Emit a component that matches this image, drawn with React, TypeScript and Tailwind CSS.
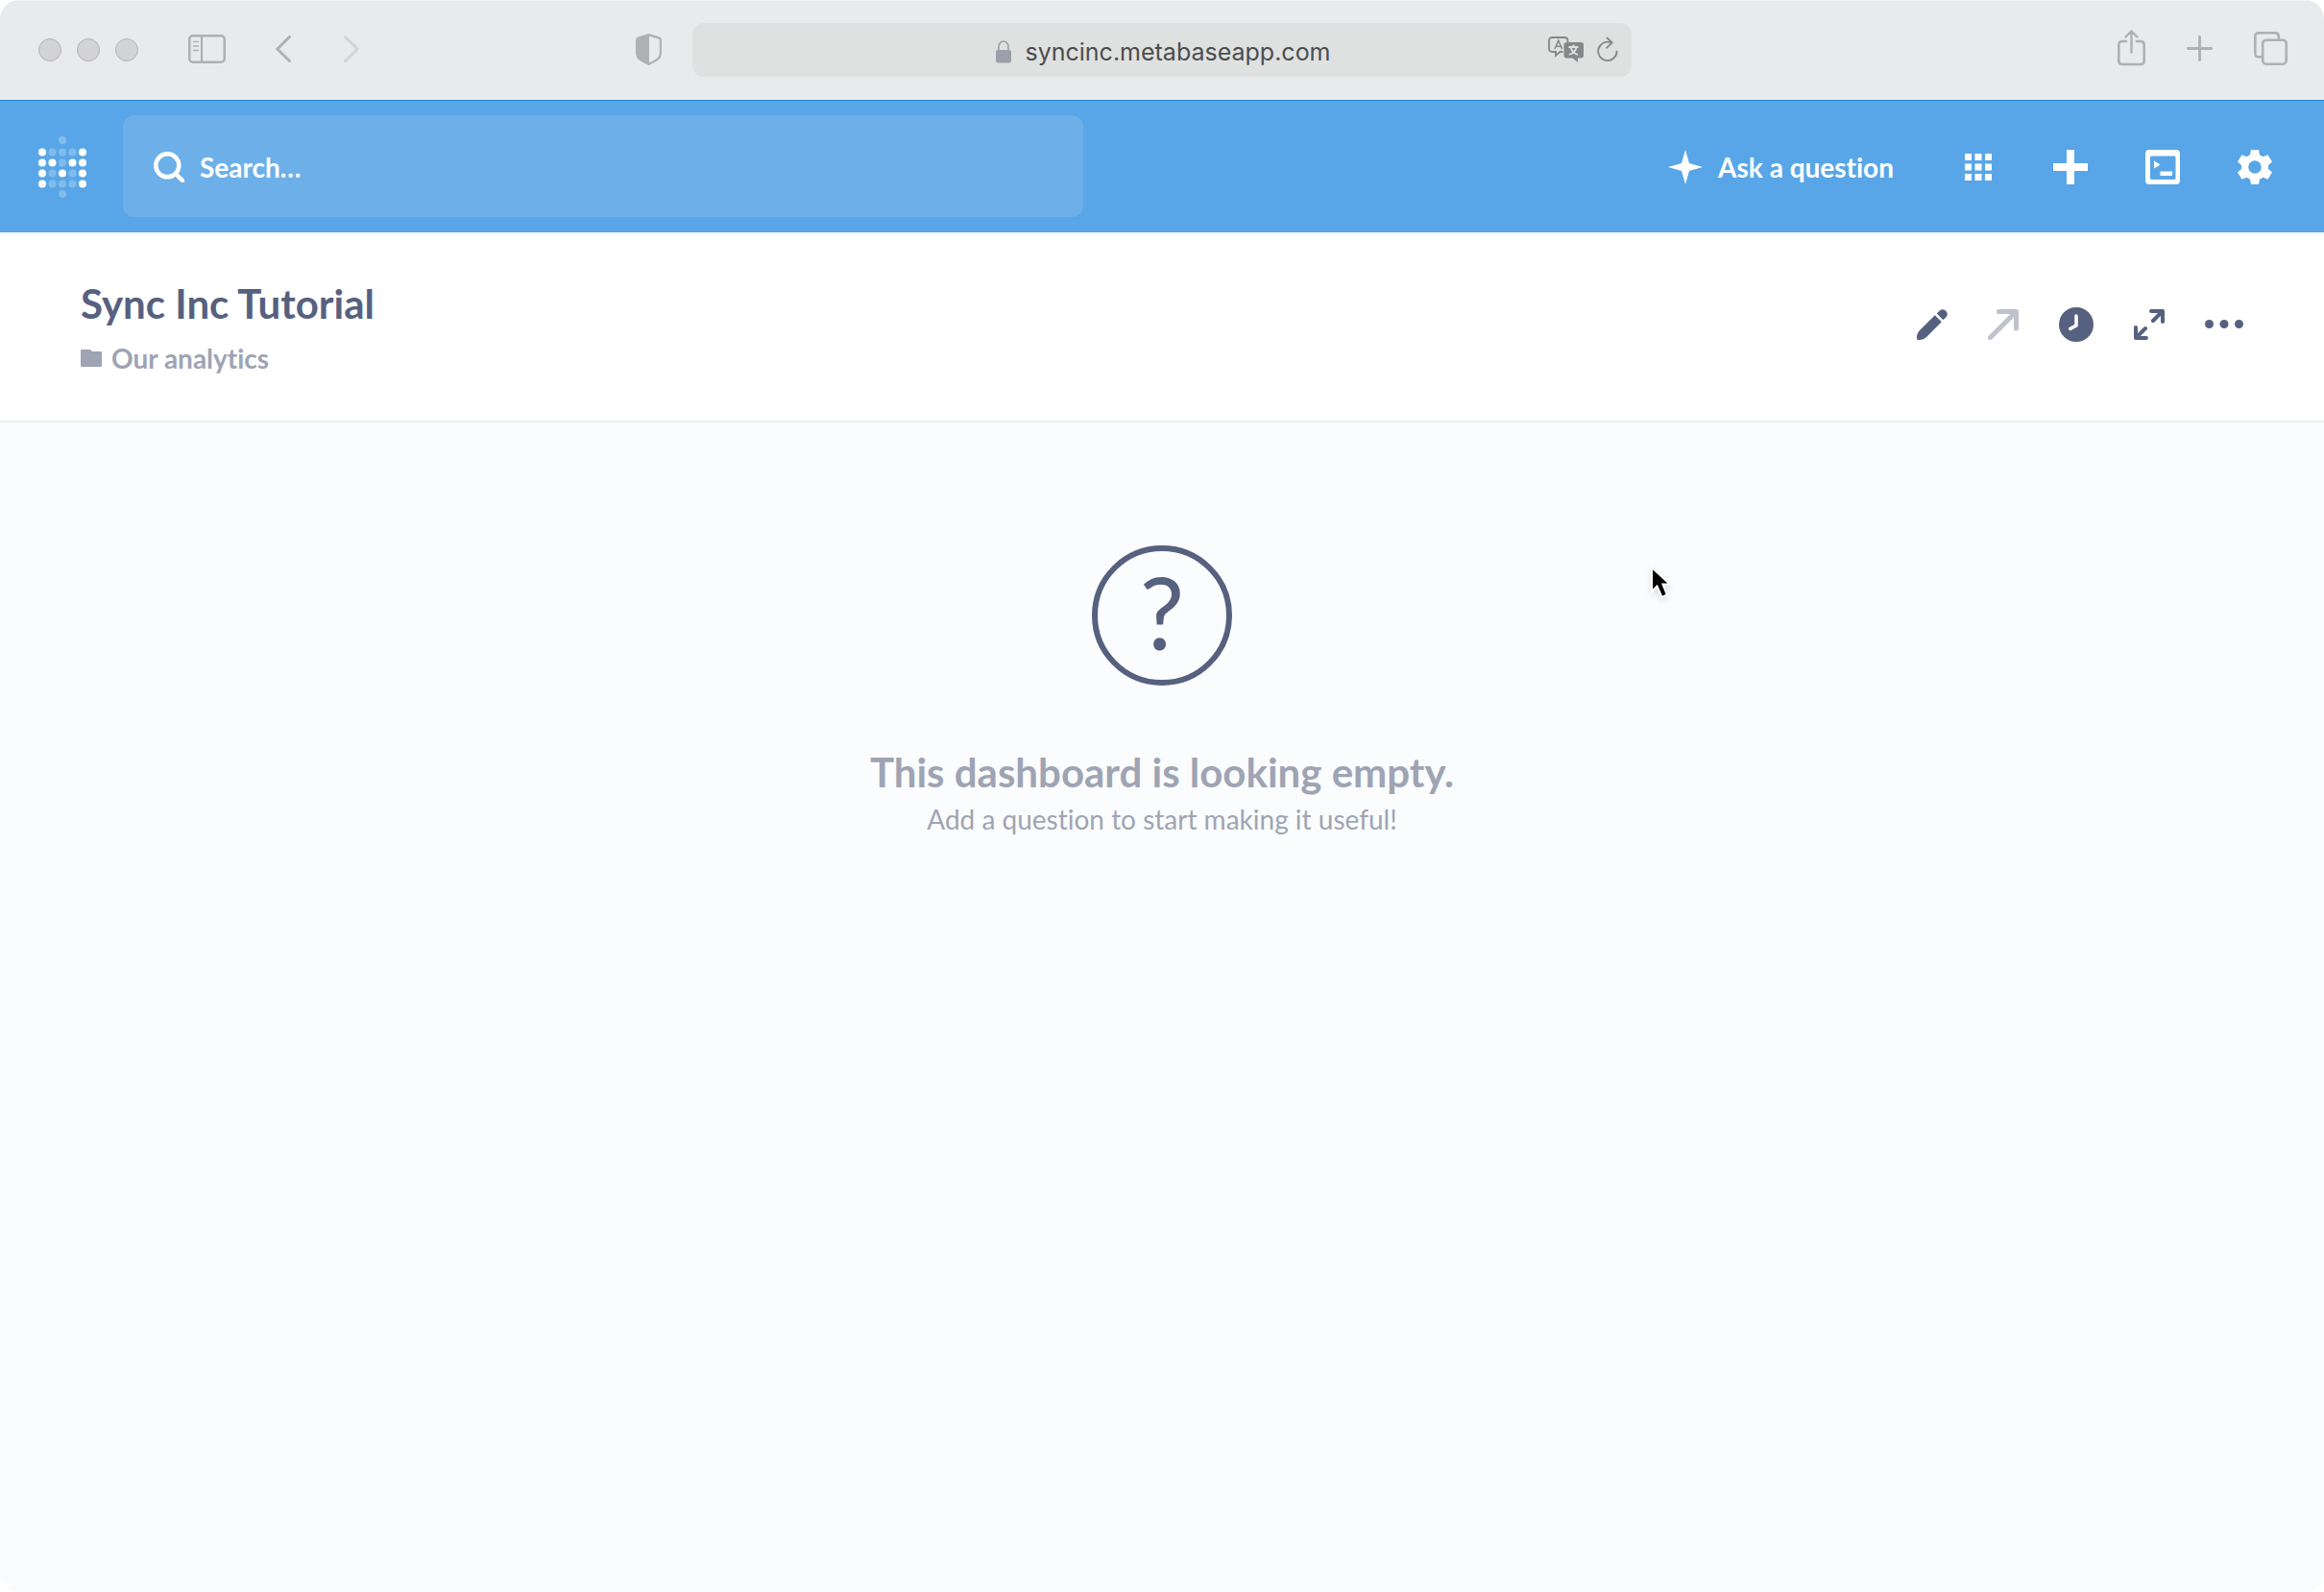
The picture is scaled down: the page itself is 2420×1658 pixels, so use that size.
import React from 'react';

const Logo: React.FC = () => {
  const columns = [4, 14.5, 25, 35.5, 46];
  const rows = [
    { y: 4, dots: '  o  ' },
    { y: 16.5, dots: 'xooox' },
    { y: 27.5, dots: 'xxoxx' },
    { y: 38.5, dots: 'xoxox' },
    { y: 49.5, dots: 'xooox' },
    { y: 60, dots: '  o  ' },
  ];

  return (
    <svg className="h-16 w-[50px]" viewBox="0 0 50 64" fill="white" aria-hidden="true">
      {rows.map((row) =>
        columns.map((x, i) =>
          row.dots[i] === ' ' ? null : (
            <circle key={`${x}-${row.y}`} cx={x} cy={row.y} r="4" opacity={row.dots[i] === 'x' ? 1 : 0.25} />
          )
        )
      )}
    </svg>
  );
};

const BrowserBar: React.FC = () => (
  <header className="grid h-[104px] grid-cols-[1fr_minmax(0,978px)_1fr] items-center border-y border-t-[#f4f4f5] border-b-[#e9eaeb] bg-[#e9eaeb] text-[#afb0b1]">
    <div className="flex items-center pr-8 pl-10">
      <div className="flex gap-4">
        <span className="size-6 rounded-full border border-[#b3b3b8] bg-[#d3d3d5]" />
        <span className="size-6 rounded-full border border-[#b3b3b8] bg-[#d3d3d5]" />
        <span className="size-6 rounded-full border border-[#b3b3b8] bg-[#d3d3d5]" />
      </div>
      <div className="flex flex-1 items-center pb-0.5">
        <button type="button" aria-label="Show sidebar" className="ml-[52px]">
          <svg className="h-[30px] w-[39px]" viewBox="0 0 39 30" fill="none" stroke="currentColor">
            <rect x="1.25" y="1.25" width="36.5" height="27.5" rx="3.5" strokeWidth="2.5" />
            <path d="M14 1v28" strokeWidth="2.2" />
            <path d="M5 7.5h6M5 12h6M5 16.5h6" strokeWidth="1.6" />
          </svg>
        </button>
        <button type="button" aria-label="Back" className="ml-[52px]">
          <svg className="h-7 w-4" viewBox="0 0 16 28" fill="none" stroke="currentColor" strokeWidth="3" strokeLinecap="round">
            <path d="M14.5 1.5 1.8 14l12.7 12.5" />
          </svg>
        </button>
        <button type="button" aria-label="Forward" className="ml-[55px] text-[#d4d4d6]">
          <svg className="h-7 w-4" viewBox="0 0 16 28" fill="none" stroke="currentColor" strokeWidth="3" strokeLinecap="round">
            <path d="M1.5 1.5 14.2 14 1.5 26.5" />
          </svg>
        </button>
        <button type="button" aria-label="Privacy report" className="ml-auto">
          <svg className="h-[33px] w-[27px]" viewBox="0 0 27 33" fill="none">
            <path
              d="M13.5 1.1 24.4 4.6Q25.9 5.1 25.9 6.6V20Q25.9 24.5 22 27.2L13.5 31.9 5 27.2Q1.1 24.5 1.1 20V6.6Q1.1 5.1 2.6 4.6Z"
              stroke="currentColor"
              strokeWidth="2.2"
            />
            <path d="M14 .8 2 4.8Q1 5.5 1 7V20Q1 25 5 27.5L14 32Z" fill="currentColor" />
          </svg>
        </button>
      </div>
    </div>

    <div className="flex h-14 items-center rounded-xl bg-[#dfe1e0] px-[14px]">
      <div className="w-[76px]" />
      <div className="flex flex-1 items-center justify-center gap-[14px] pt-1">
        <svg className="h-6 w-4 text-[#9d9fa8]" viewBox="0 0 16 24" fill="none" aria-hidden="true">
          <path d="M3 11V6.5a5 5.5 0 0 1 10 0V11" stroke="currentColor" strokeWidth="1.6" />
          <rect y="10" width="16" height="13.5" rx="2" fill="currentColor" />
        </svg>
        <span className="font-['Inter',sans-serif] text-[25px] leading-8 text-[#4c4c4d]">syncinc.metabaseapp.com</span>
      </div>
      <div className="flex items-center gap-[14px] text-[#868788]">
        <button type="button" aria-label="Translate">
          <svg className="h-7 w-[37px]" viewBox="0 0 37 28" fill="none" stroke="currentColor">
            <path d="M15.5 16H12.5L8 19.8V16H4.5Q1 16 1 12.5V4.5Q1 1 4.5 1H17Q20.5 1 20.5 4.5V6" strokeWidth="1.8" />
            <path d="M7 13 10.8 4.2 14.6 13M8.3 10.3H13.3" strokeWidth="1.5" />
            <path
              d="M19.5 6H34Q37 6 37 9V19.5Q37 22.5 34 22.5H31V27L25.5 22.5H19.5Q16.5 22.5 16.5 19.5V9Q16.5 6 19.5 6Z"
              fill="currentColor"
              stroke="none"
            />
            <path d="M21.5 11H31.5M26.5 8.5V11M23.5 11Q25 17 31 19M29.8 11Q28 17 22 19" stroke="#dfe1e0" strokeWidth="1.8" />
          </svg>
        </button>
        <button type="button" aria-label="Reload">
          <svg
            className="h-7 w-[22px]"
            viewBox="0 0 22 28"
            fill="none"
            stroke="currentColor"
            strokeWidth="1.8"
            strokeLinecap="round"
            strokeLinejoin="round"
          >
            <path d="M20.6 15.5A9.7 9.7 0 1 1 15 6.6" />
            <path d="M10.5 1.5 15.8 6.3 10 11.8" />
          </svg>
        </button>
      </div>
    </div>

    <div className="flex items-center justify-end gap-[43px] pr-[38px] pb-1">
      <button type="button" aria-label="Share">
        <svg className="h-[38px] w-[29px]" viewBox="0 0 29 38" fill="none" stroke="currentColor" strokeWidth="2.6" strokeLinecap="round">
          <path d="M9 12H5Q1.3 12 1.3 15.5V32.5Q1.3 36 5 36H24Q27.7 36 27.7 32.5V15.5Q27.7 12 24 12H20" />
          <path d="M14.5 23.5V2M8.5 7.5 14.5 1.5 20.5 7.5" strokeWidth="2.4" />
        </svg>
      </button>
      <button type="button" aria-label="New tab">
        <svg className="size-[27px]" viewBox="0 0 27 27" fill="none" stroke="currentColor" strokeWidth="2.8" strokeLinecap="round">
          <path d="M13.5 1.4V25.6M1.4 13.5H25.6" />
        </svg>
      </button>
      <button type="button" aria-label="Show tabs">
        <svg className="size-[35px]" viewBox="0 0 35 35" fill="none" stroke="currentColor" strokeWidth="2.6">
          <rect x="9.2" y="8.7" width="24.5" height="25" rx="3.5" />
          <path d="M9 26.3H5Q1.3 26.3 1.3 22.5V5Q1.3 1.3 5 1.3H22Q25.8 1.3 25.8 5V8.5" />
        </svg>
      </button>
    </div>
  </header>
);

const AppBar: React.FC = () => (
  <nav className="flex h-[138px] items-center border-t border-[#2184cf] bg-[#58a6e7] pr-[54px] pb-px pl-10 text-white">
    <a href="#" aria-label="Home" className="shrink-0 pt-0.5">
      <Logo />
    </a>
    <label className="ml-[38px] flex h-[106px] w-full max-w-[1000px] items-center gap-4 rounded-xl bg-[#6db0e9] px-8 pt-0.5">
      <svg className="size-8 shrink-0" viewBox="0 0 32 32" fill="none" stroke="currentColor" aria-hidden="true">
        <circle cx="14.3" cy="14.3" r="12" strokeWidth="4.5" />
        <path d="M23.5 23.5 30 30" strokeWidth="4.5" strokeLinecap="round" />
      </svg>
      <input
        type="text"
        aria-label="Search"
        placeholder="Search…"
        className="w-full bg-transparent text-[28px] leading-9 font-bold text-white outline-none placeholder:text-white placeholder:opacity-100"
      />
    </label>
    <div className="ml-auto flex shrink-0 items-center pt-0.5">
      <button type="button" className="flex items-center gap-4 text-[28px] leading-9 font-bold">
        <svg className="size-9" viewBox="0 0 36 36" fill="currentColor" aria-hidden="true">
          <path d="M18 0 22 14 36 18 22 22 18 36 14 22 0 18 14 14Z" />
        </svg>
        Ask a question
      </button>
      <button type="button" aria-label="Browse data" className="ml-[74px]">
        <svg className="size-7" viewBox="0 0 28 28" fill="currentColor">
          <path d="M0 0h7v7H0zM10.5 0h7v7h-7zM21 0h7v7h-7zM0 10.5h7v7H0zM10.5 10.5h7v7h-7zM21 10.5h7v7h-7zM0 21h7v7H0zM10.5 21h7v7h-7zM21 21h7v7h-7z" />
        </svg>
      </button>
      <button type="button" aria-label="Create" className="ml-16">
        <svg className="size-9" viewBox="0 0 36 36" fill="currentColor">
          <path d="M14 0h8v14h14v8H22v14h-8V22H0v-8h14z" />
        </svg>
      </button>
      <button type="button" aria-label="Write SQL" className="ml-[60px]">
        <svg className="size-9" viewBox="0 0 36 36" fill="currentColor">
          <path
            fillRule="evenodd"
            d="M4 0H32Q36 0 36 4V32Q36 36 32 36H4Q0 36 0 32V4Q0 0 4 0ZM6.5 6.5Q5 6.5 5 8V29.5Q5 31 6.5 31H30Q31.5 31 31.5 29.5V8Q31.5 6.5 30 6.5Z"
          />
          <path d="M9 11.5 15.5 15.5 9 19.5ZM15.5 22.5H28V27H15.5Z" />
        </svg>
      </button>
      <button type="button" aria-label="Settings" className="ml-[60px]">
        <svg className="size-9" viewBox="0 0 36 36" fill="currentColor">
          <path
            fillRule="evenodd"
            d="M14 0H22L23 5.2 26.5 7.2 31.5 5.2 36 12.5 32 16V20L36 23.5 31.5 30.8 26.5 28.8 23 30.8 22 36H14L13 30.8 9.5 28.8 4.5 30.8 0 23.5 4 20V16L0 12.5 4.5 5.2 9.5 7.2 13 5.2ZM18 11.2A6.8 6.8 0 1 0 18 24.8 6.8 6.8 0 1 0 18 11.2Z"
          />
        </svg>
      </button>
    </div>
  </nav>
);

const DashboardHeader: React.FC = () => (
  <section className="flex h-[198px] items-center justify-between border-b-2 border-[#eeeff0] bg-white px-[84px] text-[#56617f]">
    <div className="pt-0.5">
      <h1 className="text-[42px] leading-[50px] font-bold">Sync Inc Tutorial</h1>
      <a href="#" className="mt-[14px] flex items-center gap-[10px] text-[28px] leading-9 font-bold text-[#9ea4b4]">
        <svg className="h-[18px] w-[22px]" viewBox="0 0 22 18" fill="currentColor" aria-hidden="true">
          <path d="M1 0H10L12 2H21Q22 2 22 3V17Q22 18 21 18H1Q0 18 0 17V1Q0 0 1 0Z" />
        </svg>
        Our analytics
      </a>
    </div>
    <div className="flex items-center gap-[42px] pb-1">
      <button type="button" aria-label="Edit dashboard">
        <svg className="size-8" viewBox="0 0 32 32" fill="currentColor">
          <path d="M18.8 6.2 25.8 13.2 10 29Q7 32 3.5 32H1.2Q0 32 0 30.8V28.5Q0 25 3 22Z" />
          <path d="M20.8 4.6 23.8 1.5Q27 -1.2 30.3 1.7 33.3 5 30.5 8.2L27.4 11.2Z" />
        </svg>
      </button>
      <button type="button" aria-label="Share dashboard" disabled className="text-[#bfc2cc]">
        <svg className="size-8" viewBox="0 0 32 32" fill="none" stroke="currentColor" strokeWidth="5" strokeLinecap="round" strokeLinejoin="round">
          <path d="M2.5 29.5 29 3M11.5 2.5H29.5V20" />
        </svg>
      </button>
      <button type="button" aria-label="Auto-refresh">
        <svg className="size-9" viewBox="0 0 36 36" fill="currentColor">
          <circle cx="18" cy="18" r="18" />
          <path d="M18 9V19L11.8 22.3" fill="none" stroke="white" strokeWidth="3.6" strokeLinecap="round" strokeLinejoin="round" />
        </svg>
      </button>
      <button type="button" aria-label="Enter fullscreen">
        <svg className="size-8" viewBox="0 0 32 32" fill="none" stroke="currentColor" strokeWidth="4" strokeLinecap="round" strokeLinejoin="round">
          <path d="M18 2H30V13M20 12 29.5 2.5M2 19V30H13M2.5 29.5 12 20" />
        </svg>
      </button>
      <button type="button" aria-label="More options">
        <svg className="h-9 w-10" viewBox="0 0 40 36" fill="currentColor">
          <circle cx="4.5" cy="17.5" r="4.5" />
          <circle cx="20" cy="17.5" r="4.5" />
          <circle cx="35.5" cy="17.5" r="4.5" />
        </svg>
      </button>
    </div>
  </section>
);

const EmptyDashboard: React.FC = () => (
  <main className="relative flex flex-1 flex-col items-center bg-[#fafcfd] pt-32 text-[#9ea4b4]">
    <div className="flex size-[146px] items-center justify-center rounded-full border-[6px] border-[#56617f] pb-2 text-[104px] leading-[120px] text-[#56617f]">
      ?
    </div>
    <h2 className="mt-[65px] text-[42px] leading-[50px] font-bold">This dashboard is looking empty.</h2>
    <p className="mt-1.5 text-[28px] leading-9">Add a question to start making it useful!</p>
    {/* mouse pointer */}
    <svg className="absolute top-[149px] left-[71%] h-10 w-7 drop-shadow-md" viewBox="0 0 28 40" aria-hidden="true">
      <path d="M2 2V27L7.5 21.5 12.5 33 18 30.5 13.5 19.5H21Z" fill="black" stroke="white" strokeWidth="2" />
    </svg>
  </main>
);

const App: React.FC = () => (
  <div className="min-h-screen bg-white">
    <div className="flex min-h-screen flex-col overflow-hidden rounded-[20px] font-['Lato',sans-serif] [font-variant-ligatures:none]">
      <BrowserBar />
      <AppBar />
      <DashboardHeader />
      <EmptyDashboard />
    </div>
  </div>
);

export default App;
